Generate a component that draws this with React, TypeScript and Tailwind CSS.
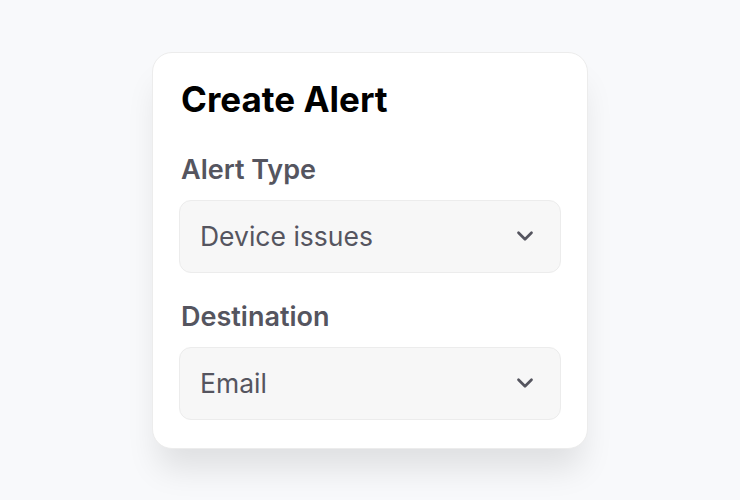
import React from 'react';
import { ChevronDown } from 'lucide-react';

interface SelectFieldProps {
  label: string;
  value: string;
}

const SelectField = ({ label, value }: SelectFieldProps) => {
  return (
    <div className="flex flex-col gap-4">
      <label className="pl-[2px] text-[27px] leading-7 font-semibold text-[#55555f]">{label}</label>
      <div className="h-[73px] flex items-center justify-between pl-5 pr-[22px] rounded-xl bg-[#f7f7f7] border border-[#ececec]">
        <span className="text-[26.5px] leading-8 text-[#55555f]">{value}</span>
        <ChevronDown size={26} strokeWidth={2.5} className="text-[#55555f]" />
      </div>
    </div>
  );
};

export default function App() {
  return (
    <div
      className="w-[740px] h-[500px] flex items-center justify-center bg-[#f8f9fb]"
      style={{ fontFamily: 'Inter, "Noto Sans", sans-serif' }}
    >
      <div className="w-[436px] h-[397px] bg-white rounded-[20px] border border-[#ececec] px-[26px] pt-7 shadow-[0_26px_32px_-6px_rgba(0,0,0,0.1)]">
        <h1 className="text-[35px] leading-9 font-bold text-black pl-[2px]">Create Alert</h1>
        <div className="mt-[39px] flex flex-col gap-[30px]">
          <SelectField label="Alert Type" value="Device issues" />
          <SelectField label="Destination" value="Email" />
        </div>
      </div>
    </div>
  );
}
